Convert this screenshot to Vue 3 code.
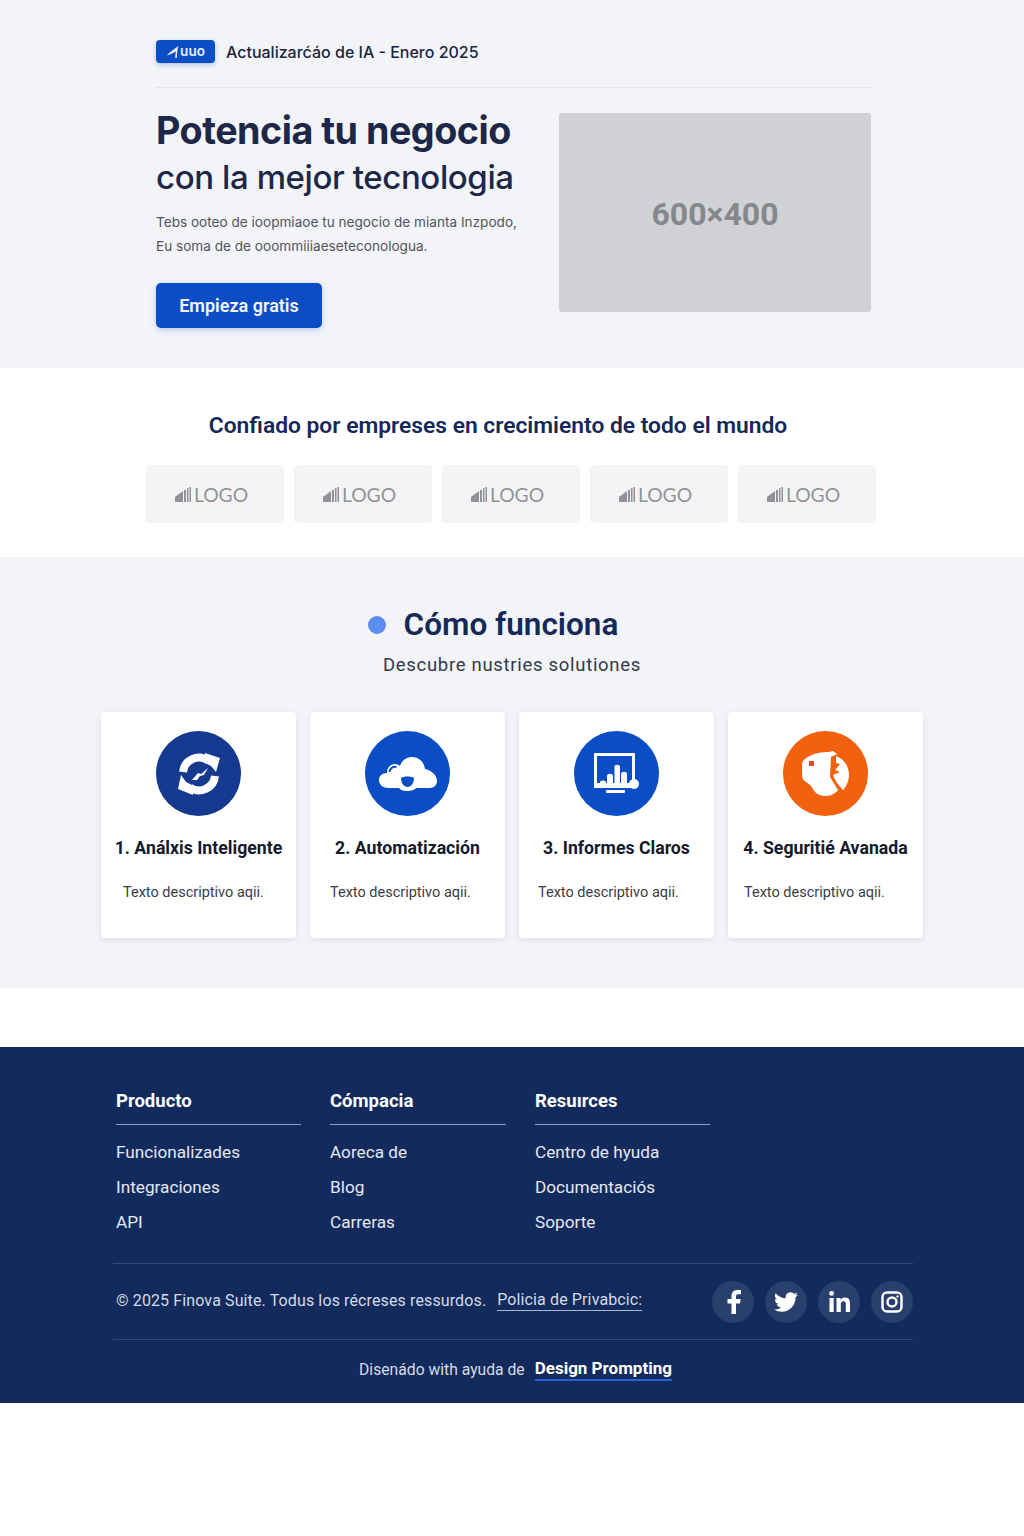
<template>
  <div class="page">
    <section class="hero">
      <div class="hero-inner">
        <div class="topbar">
          <span class="badge">
            <svg width="13" height="12" viewBox="0 0 11 11" fill="#e8eefb"><path d="M0 8.500C3 6 6.500 3 11 0c-1 3-1.500 6.500-1.500 11H8c0-2 .2-4 .7-6C6 6.500 3.500 7.800 0 8.500z" /></svg>
            <span>uuo</span>
          </span>
          <span class="topbar-text">Actualizarćáo de IA - Enero 2025</span>
        </div>
        <div class="hero-row">
          <div class="hero-copy">
            <h1>Potencia tu negocio</h1>
            <h2>con la mejor tecnologia</h2>
            <p>Tebs ooteo de ioopmiaoe tu negocio de mianta Inzpodo,<br />Eu soma de de ooommiiiaesetеconologua.</p>
            <button class="cta">Empieza gratis</button>
          </div>
          <div class="placeholder">600×400</div>
        </div>
      </div>
    </section>

    <section class="trusted">
      <h3>Confiado por empreses en crecimiento de todo el mundo</h3>
      <div class="logos">
        <div v-for="n in 5" :key="n" class="logo-box">
          <svg width="16" height="15" viewBox="0 0 16 15" fill="#929296">
            <path d="M0 15v-5l8-6v11zM9 3h2v12H9zM12 1h1.500v14H12zM14.500 0H16v15h-1.500z" />
          </svg>
          <span>LOGO</span>
        </div>
      </div>
    </section>

    <section class="features">
      <div class="features-head">
        <span class="dot"></span>
        <h2>Cómo funciona</h2>
      </div>
      <p class="features-sub">Descubre nustries solutiones</p>
      <div class="cards">
        <div v-for="card in cards" :key="card.title" class="card">
          <div class="circle" :style="{ background: card.color }">
            <svg v-if="card.icon === 'sync'" width="42" height="42" viewBox="0 0 42 42">
              <path d="M5 19A16 16 0 0 1 30 7.500" fill="none" stroke="#fff" stroke-width="8" />
              <path d="M37 23A16 16 0 0 1 12 34.500" fill="none" stroke="#fff" stroke-width="8" />
              <path d="M27 0l15 5-4 14-5-6-6-3z" fill="#fff" />
              <path d="M15 42L0 36l3-14 5 7 6 3z" fill="#fff" />
              <path d="M14 27l6-7 3 1 7-6-4 7-4 1-3 4z" fill="#fff" />
            </svg>
            <svg v-else-if="card.icon === 'cloud'" width="58" height="34" viewBox="0 0 58 34" fill="#fff">
              <path d="M9 31c-6 0-9-4-9-8s3-7 8-7c0-6 4-9 8-9 2 0 4 1 5 2 2-6 7-9 12-9 7 0 12 5 13 12 6 1 12 6 12 12 0 4-3 7-7 7H37c-1 2-5 3-9 3s-7-1-8-3z" />
              <path d="M10.500 15c.5-4 4-6 7-5" fill="none" stroke="#0b4dc4" stroke-width="2" />
              <path d="M22 21c3-2 10-2 13 0 0 5-3 9-6.500 9S22 26 22 21z" fill="#0b4dc4" />
            </svg>
            <svg v-else-if="card.icon === 'chart'" width="46" height="42" viewBox="0 0 46 42" fill="#fff">
              <rect x="0" y="0" width="41" height="35" rx="1" />
              <rect x="3" y="3" width="35" height="27" fill="#0b4dc4" />
              <path d="M6 30v-1c1-2 5-2 6 0v1zM13 30v-7c0-3 6-3 6 0v7zM20.500 30V14c0-3 5.500-3 5.500 0v16zM27 30v-9c0-3 6-3 6 0v9z" />
              <circle cx="40" cy="31" r="5" />
              <rect x="12" y="37" width="19" height="3" rx="1" />
            </svg>
            <svg v-else width="47" height="45" viewBox="0 0 47 45" fill="#fff">
              <path d="M6 6c6-4 14-5 21-5l4-1 4 3-6 3-1 20 8 13c-4 5-9 6-13 6-6 0-10-3-12-7-2-4-4-5-7-7-3-2-4-4-4-7V14c0-4 2-6 6-8z" />
              <path d="M34 5c8 3 13 10 13 19 0 6-3 12-6 15-4-4-8-9-10-15l7-3-5-2 5-6-4-1z" />
              <rect x="7" y="10" width="5" height="5" fill="#e4472a" />
            </svg>
          </div>
          <h4>{{ card.title }}</h4>
          <p>Texto descriptivo aqii.</p>
        </div>
      </div>
    </section>

    <div class="spacer"></div>

    <footer class="footer">
      <div class="columns">
        <div v-for="col in columns" :key="col.title" class="col" :style="{ width: col.width + 'px' }">
          <h5>{{ col.title }}</h5>
          <a v-for="link in col.links" :key="link">{{ link }}</a>
        </div>
      </div>
      <div class="legal">
        <div class="legal-text">
          <span>© 2025 Finova Suite. Todus los récreses ressurdos.</span>
          <a>Policia de Privabcic:</a>
        </div>
        <div class="socials">
          <span class="social">
            <svg width="15" height="24" viewBox="0 0 15 24" fill="#fff"><path d="M10 24V13.500h4l.6-4.500H10V6.500c0-1.400.4-2.200 2.200-2.200H15V.3C14.500.2 13 0 11.500 0 8 0 5.500 2.100 5.500 6V9H1.500v4.500h4V24z" /></svg>
          </span>
          <span class="social">
            <svg width="24" height="24" viewBox="0 0 24 24" fill="#fff"><path d="M23.950 4.570a10 10 0 0 1-2.820.770 4.960 4.960 0 0 0 2.160-2.720c-.95.550-2 .96-3.130 1.190a4.920 4.920 0 0 0-8.380 4.480C7.690 8.090 4.070 6.130 1.640 3.160a4.820 4.820 0 0 0-.67 2.480c0 1.710.87 3.210 2.190 4.090a4.900 4.900 0 0 1-2.230-.61v.06a4.920 4.920 0 0 0 3.950 4.830 5 5 0 0 1-2.210.08 4.940 4.940 0 0 0 4.600 3.420A9.870 9.870 0 0 1 0 19.540a14 14 0 0 0 7.560 2.210c9.050 0 14-7.500 14-13.980 0-.21 0-.42-.02-.63a9.940 9.940 0 0 0 2.460-2.550z" /></svg>
          </span>
          <span class="social">
            <svg width="21" height="21" viewBox="0 0 21 21" fill="#fff"><path d="M.5 7h4.200v14H.5zM2.600 0a2.400 2.400 0 1 1 0 4.800 2.400 2.400 0 0 1 0-4.800zM7.500 7h4v2c.7-1.300 2.200-2.400 4.400-2.400 4.300 0 5.100 2.800 5.100 6.500V21h-4.200v-7c0-1.700 0-3.700-2.300-3.700s-2.700 1.800-2.700 3.600V21H7.500z" /></svg>
          </span>
          <span class="social">
            <svg width="22" height="22" viewBox="0 0 22 22" fill="none" stroke="#fff" stroke-width="2.400"><rect x="1.500" y="1.500" width="19" height="19" rx="4.500" /><circle cx="11" cy="11" r="4.500" /><circle cx="16.500" cy="5.500" r="1" fill="#fff" stroke-width="0.500" /></svg>
          </span>
        </div>
      </div>
      <div class="credit">
        <span>Disenádo with ayuda de</span>
        <strong>Design Prompting</strong>
      </div>
    </footer>
  </div>
</template>

<script setup>
const cards = [
  { title: '1. Análxis Inteligente', icon: 'sync', color: '#14398f' },
  { title: '2. Automatización', icon: 'cloud', color: '#0b4dc4' },
  { title: '3. Informes Claros', icon: 'chart', color: '#0b4dc4' },
  { title: '4. Seguritié Avanada', icon: 'shield', color: '#f2610f' }
]

const columns = [
  { title: 'Producto', width: 185, links: ['Funcionalizades', 'Integraciones', 'API'] },
  { title: 'Cómpacia', width: 176, links: ['Aoreca de', 'Blog', 'Carreras'] },
  { title: 'Resuırces', width: 175, links: ['Centro de hyuda', 'Documentaciós', 'Soporte'] }
]
</script>

<style scoped>
.page {
  width: 1024px;
  min-height: 1536px;
  background: #fff;
  font-family: Roboto, "Liberation Sans", sans-serif;
}

.hero {
  height: 368px;
  box-sizing: border-box;
  padding: 40px 153px 0 156px;
  background: #f3f4f8;
}

.topbar {
  display: flex;
  align-items: center;
  gap: 11px;
  height: 23px;
  padding-bottom: 24px;
  border-bottom: 1px solid #e3e4e9;
}

.badge {
  display: flex;
  align-items: center;
  justify-content: center;
  gap: 1px;
  width: 59px;
  height: 23px;
  border-radius: 4px;
  background: #0b4dc4;
  box-shadow: 0 2px 5px rgba(11, 77, 196, 0.3);
  color: #e8eefb;
  font: 600 13.500px/23px Inter, sans-serif;
}

.topbar-text {
  margin-top: 1px;
  color: #1c2540;
  font: 500 16px/23px Inter, sans-serif;
}

.hero-row {
  display: flex;
  justify-content: space-between;
  margin-top: 25px;
}

.hero-copy {
  margin-top: -1px;
}

.hero-copy h1 {
  margin: 0;
  color: #1d2748;
  font: 700 37.700px/36px Inter, sans-serif;
  letter-spacing: -0.5px;
}

.hero-copy h2 {
  margin: 10px 0 0;
  color: #1d2748;
  font: 500 33px/38px Inter, sans-serif;
  letter-spacing: -0.4px;
}

.hero-copy p {
  margin: 14px 0 0;
  color: #50535d;
  font: 400 13.600px/24px Inter, sans-serif;
}

.cta {
  display: block;
  width: 166px;
  height: 45px;
  margin-top: 25px;
  border: none;
  border-radius: 5px;
  background: #0b4dc4;
  box-shadow: 0 2px 6px rgba(11, 77, 196, 0.25);
  color: #f3f6fd;
  font: 600 18px Roboto, sans-serif;
}

.placeholder {
  display: flex;
  align-items: center;
  justify-content: center;
  width: 312px;
  height: 199px;
  padding-top: 2px;
  box-sizing: border-box;
  border-radius: 3px;
  background: #d0d1d4;
  color: #85878c;
  font: 700 32px Roboto, sans-serif;
}

.trusted {
  height: 189px;
  box-sizing: border-box;
  padding: 44px 0 0 146px;
  background: #fff;
}

.trusted h3 {
  width: 704px;
  margin: 0;
  color: #14285a;
  font: 600 22.800px/28px Roboto, sans-serif;
  text-align: center;
}

.logos {
  display: flex;
  gap: 10px;
  margin-top: 25px;
}

.logo-box {
  display: flex;
  align-items: center;
  justify-content: center;
  gap: 3px;
  width: 138px;
  height: 58px;
  box-sizing: border-box;
  padding-right: 7px;
  border-radius: 4px;
  background: #f4f4f7;
  color: #929296;
  font: 400 19.300px Lato, sans-serif;
}

.features {
  height: 431px;
  box-sizing: border-box;
  padding-top: 48px;
  background: #f3f4f8;
}

.features-head {
  display: flex;
  align-items: center;
  justify-content: center;
  gap: 18px;
  height: 40px;
  padding-right: 38px;
}

.dot {
  width: 18px;
  height: 18px;
  border-radius: 50%;
  background: #5b8df0;
}

.features-head h2 {
  margin: 0;
  color: #14285a;
  font: 600 31.500px/40px Roboto, sans-serif;
}

.features-sub {
  margin: 8px 0 0;
  color: #33384a;
  font: 400 18.500px/24px Roboto, sans-serif;
  letter-spacing: 0.7px;
  text-align: center;
}

.cards {
  display: grid;
  grid-template-columns: repeat(4, 195px);
  gap: 14px;
  margin: 35px 0 0 101px;
}

.card {
  height: 226px;
  box-sizing: border-box;
  padding-top: 19px;
  border-radius: 4px;
  background: #fff;
  box-shadow: 0 2px 6px rgba(30, 40, 80, 0.1);
}

.circle {
  display: flex;
  align-items: center;
  justify-content: center;
  width: 85px;
  height: 85px;
  margin: 0 auto;
  border-radius: 50%;
}

.card h4 {
  margin: 20px 0 0;
  color: #141a2c;
  font: 700 17.700px/24px Roboto, sans-serif;
  text-align: center;
  white-space: nowrap;
}

.card p {
  margin: 23px 0 0 20px;
  color: #3a3d47;
  font: 400 14.500px/20px Roboto, sans-serif;
}

.card:nth-child(1) p {
  margin-left: 22px;
}

.card:nth-child(3) p {
  margin-left: 19px;
}

.card:nth-child(4) p {
  margin-left: 16px;
}

.spacer {
  height: 59px;
}

.footer {
  height: 356px;
  box-sizing: border-box;
  padding: 42px 111px 0 113px;
  background: #122a5c;
  color: #eef1f8;
}

.columns {
  display: flex;
  gap: 29px;
  height: 174px;
  padding-left: 3px;
  border-bottom: 1px solid #324a7c;
}

.col h5 {
  margin: 0 0 10px;
  padding-bottom: 11px;
  border-bottom: 1px solid #8da0c6;
  color: #fff;
  font: 700 18.500px/24px Roboto, sans-serif;
}

.col a {
  display: block;
  color: #e3e8f3;
  font: 400 17.200px/35px Roboto, sans-serif;
}

.legal {
  display: flex;
  align-items: center;
  justify-content: space-between;
  height: 75px;
  padding: 0 0 0 3px;
  border-bottom: 1px solid #324a7c;
}

.legal-text {
  display: flex;
  align-items: center;
  gap: 11px;
  margin-top: -2px;
  color: #d5dbe8;
  font: 400 16px/20px Roboto, sans-serif;
  letter-spacing: 0.12px;
}

.legal-text a {
  border-bottom: 1px solid #aab7d2;
}

.socials {
  display: flex;
  gap: 11px;
}

.social {
  display: flex;
  align-items: center;
  justify-content: center;
  width: 42px;
  height: 42px;
  border-radius: 50%;
  background: #293f6e;
}

.credit {
  display: flex;
  align-items: center;
  justify-content: center;
  gap: 10px;
  height: 58px;
  padding-left: 5px;
  color: #d5dbe8;
  font: 400 15.700px Roboto, sans-serif;
}

.credit strong {
  border-bottom: 2px solid #2a62d8;
  color: #fff;
  font: 700 17px/21px Roboto, sans-serif;
}
</style>
